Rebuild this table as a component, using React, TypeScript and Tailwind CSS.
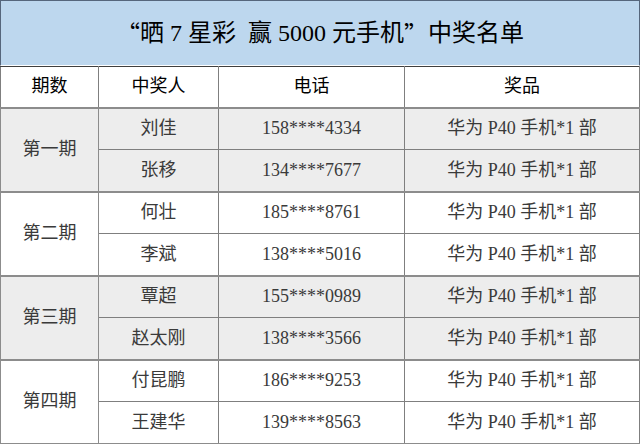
import React from "react";

const groups = [
  { name: "第一期", gray: true, rows: [["刘佳", "158****4334"], ["张移", "134****7677"]] },
  { name: "第二期", gray: false, rows: [["何壮", "185****8761"], ["李斌", "138****5016"]] },
  { name: "第三期", gray: true, rows: [["覃超", "155****0989"], ["赵太刚", "138****3566"]] },
  { name: "第四期", gray: false, rows: [["付昆鹏", "186****9253"], ["王建华", "139****8563"]] },
];

export default function App() {
  const font = { fontFamily: '"Liberation Serif", "Noto Sans CJK SC", serif' };
  const cjk = { fontFamily: '"Noto Sans CJK SC", sans-serif' };
  return (
    <div className="w-[640px] h-[444px] overflow-hidden bg-white" style={font}>
      <div className="h-[66px] bg-[#bdd7ee] border-t border-l border-r border-[#56667c] border-b border-b-white flex items-center justify-center text-[24px] text-black">
        <span style={cjk}>“</span>晒 7 星彩&nbsp; 赢 5000 元手机<span style={cjk}>”</span>中奖名单
      </div>
      <table className="w-[640px] border-collapse table-fixed">
        <colgroup>
          <col className="w-[98px]" />
          <col className="w-[120px]" />
          <col className="w-[186px]" />
          <col />
        </colgroup>
        <thead>
          <tr className="h-[41px] text-[18px] text-black">
            <th className="font-normal border border-[#7f7f7f] border-t-[#3f3f3f]">期数</th>
            <th className="font-normal border border-[#7f7f7f] border-t-[#3f3f3f]">中奖人</th>
            <th className="font-normal border border-[#7f7f7f] border-t-[#3f3f3f]">电话</th>
            <th className="font-normal border border-[#7f7f7f] border-t-[#3f3f3f]">奖品</th>
          </tr>
        </thead>
        <tbody className="text-[18px] text-[#3a3a3a]">
          {groups.map((g, gi) =>
            g.rows.map((r, ri) => (
              <tr key={gi + "-" + ri} className={"h-[42px] " + (g.gray ? "bg-[#ededed]" : "bg-white")}>
                {ri === 0 && (
                  <td rowSpan={2} className="text-center border-l border-r border-t-2 border-b-2 border-[#8c8c8c]">
                    {g.name}
                  </td>
                )}
                <td className={"text-center border border-[#7f7f7f] " + (ri === 0 ? "border-t-2 border-t-[#8c8c8c]" : "border-b-2 border-b-[#8c8c8c]")}>{r[0]}</td>
                <td className={"text-center border border-[#7f7f7f] " + (ri === 0 ? "border-t-2 border-t-[#8c8c8c]" : "border-b-2 border-b-[#8c8c8c]")}>{r[1]}</td>
                <td className={"text-center border border-[#7f7f7f] " + (ri === 0 ? "border-t-2 border-t-[#8c8c8c]" : "border-b-2 border-b-[#8c8c8c]")}>华为 P40 手机*1 部</td>
              </tr>
            ))
          )}
        </tbody>
      </table>
    </div>
  );
}
